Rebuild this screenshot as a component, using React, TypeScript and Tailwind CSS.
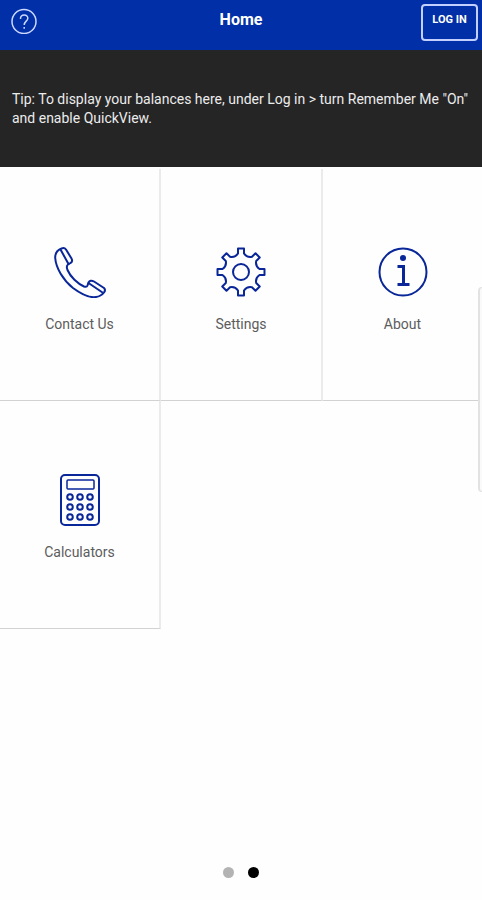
import type { ReactNode } from "react";

const rotate = (x: number, y: number, degrees: number) => {
  const a = (degrees * Math.PI) / 180;
  const px = 26 + x * Math.cos(a) - y * Math.sin(a);
  const py = 26 + x * Math.sin(a) + y * Math.cos(a);
  return `${px.toFixed(2)} ${py.toFixed(2)}`;
};

// One tooth and the curved gap after it, repeated eight times.
const gearPath =
  [0, 45, 90, 135, 180, 225, 270, 315]
    .map(
      (deg, i) =>
        `${i === 0 ? "M" : "L"}${rotate(-3, -18.5, deg)}` +
        `L${rotate(-3, -23.5, deg)}L${rotate(3, -23.5, deg)}` +
        `L${rotate(3, -18.5, deg)}` +
        `C${rotate(5, -15.5, deg)} ${rotate(-5, -15.5, deg + 45)} ${rotate(-3, -18.5, deg + 45)}`,
    )
    .join("") + "Z";

const PhoneIcon = () => (
  <svg
    aria-hidden="true"
    viewBox="0 0 52 52"
    className="size-[52px] fill-none stroke-[#0a2799] stroke-2"
    strokeLinejoin="round"
    strokeLinecap="round"
  >
    <path d="M7.5 2.5C3.5 4 1 7 1.2 12C2 22 9 34 19 42C27 48 35 52 42 51C46 50.5 48 49 50 46.5C51.5 44.5 51.5 43.5 50 42L40 35.5C37.5 34 35.5 34.5 34.5 36.5L33.5 39.5C33 41 31.5 41 30 40.5C23.5 37.5 16.5 31 13.5 24C12.5 21.5 12 20 14 18.5L16.5 17C18.5 16 18.5 14.5 17.5 12.5L12 3.5C10.5 1.5 9.5 1.5 7.5 2.5Z" />
    <path d="M6.5 3.5L14.5 18M34.5 37L48.5 46.5" />
  </svg>
);

const GearIcon = () => (
  <svg
    aria-hidden="true"
    viewBox="0 0 52 52"
    className="size-[52px] fill-none stroke-[#0a2799] stroke-2"
    strokeLinejoin="round"
  >
    <path d={gearPath} />
    <circle cx="26" cy="26" r="8" />
  </svg>
);

const InfoIcon = () => (
  <svg
    aria-hidden="true"
    viewBox="0 0 52 52"
    className="size-[52px] fill-none stroke-[#0a2799] stroke-2"
  >
    <circle cx="26" cy="26" r="23.5" />
    <circle cx="26" cy="12" r="3" className="fill-[#0a2799] stroke-none" />
    <path d="M20.5 20.5H26.5V38" className="stroke-3" />
    <path d="M20.5 38.5H32.5" className="stroke-3" />
  </svg>
);

const CalculatorIcon = () => (
  <svg
    aria-hidden="true"
    viewBox="0 0 52 52"
    className="size-[52px] fill-none stroke-[#0a2799] stroke-2"
  >
    <rect x="7" y="1" width="38" height="50" rx="4" />
    <rect x="13" y="6" width="27" height="9" rx="1" className="stroke-[1.5px]" />
    {[23, 33, 43].map((cy) =>
      [16, 26, 36].map((cx) => (
        <circle key={`${cx}-${cy}`} cx={cx} cy={cy} r="2.8" />
      )),
    )}
  </svg>
);

const Tile = ({
  label,
  icon,
  className,
}: {
  label: string;
  icon: ReactNode;
  className: string;
}) => (
  <button
    type="button"
    className={`flex flex-col items-center border-b border-r-[#ebebeb] border-b-[#d2d2d2] ${className}`}
  >
    {icon}
    <span className="mt-4 text-sm/5 text-[#5c5c5c]">{label}</span>
  </button>
);

export default function App() {
  return (
    <div className="relative flex min-h-screen flex-col bg-[#fefefe] font-['Roboto','Liberation_Sans',sans-serif]">
      <header className="grid h-[50px] grid-cols-3 items-start bg-[#002fa7] text-white">
        <button type="button" aria-label="Help" className="mt-2 ml-[11px] w-fit">
          <svg
            aria-hidden="true"
            viewBox="0 0 26 26"
            className="size-[26px] fill-none stroke-[#ccd8ff] stroke-[1.5px]"
          >
            <circle cx="13" cy="13.5" r="12" />
            <path d="M9.5 11C9.3 8.5 11 7 13.2 7C15.500 7 17 8.5 16.8 10.5C16.6 13 13.2 13.500 13.2 17" />
            <path d="M13.2 19V20.8" />
          </svg>
        </button>
        <h1 className="mt-2 text-center text-base/6 font-bold">Home</h1>
        <button
          type="button"
          className="mt-1 mr-1 h-[37px] w-[57px] justify-self-end rounded-sm border-2 border-[#c3d0ff] pb-1.5 text-[11px]/4 font-bold"
        >
          LOG IN
        </button>
      </header>

      <section className="h-[117px] bg-[#252525] px-3 pt-10 text-sm/[19px] text-[#ececec]">
        <p>
          Tip: To display your balances here, under Log in &gt; turn Remember Me
          "On" and enable QuickView.
        </p>
      </section>

      <main className="mt-0.5 grid grid-cols-[161fr_162fr_159fr]">
        <Tile
          label="Contact Us"
          icon={<PhoneIcon />}
          className="h-[232px] border-r-2 pt-[77px]"
        />
        <Tile
          label="Settings"
          icon={<GearIcon />}
          className="h-[232px] border-r-2 pt-[77px]"
        />
        <Tile
          label="About"
          icon={<InfoIcon />}
          className="h-[232px] pt-[77px]"
        />
        <Tile
          label="Calculators"
          icon={<CalculatorIcon />}
          className="h-[228px] border-r-2 pt-[73px]"
        />
      </main>

      <nav
        aria-label="Pages"
        className="mt-auto flex justify-center gap-3.5 pb-[22px]"
      >
        <button
          type="button"
          aria-label="Page 1"
          className="size-[11px] rounded-full bg-[#b3b3b3]"
        />
        <button
          type="button"
          aria-label="Page 2"
          aria-current="page"
          className="size-[11px] rounded-full bg-black"
        />
      </nav>

      {/* Edge of the slide-in panel */}
      <div className="absolute top-[287px] right-0 h-[205px] w-1 rounded-l-sm border-y border-l-2 border-[#e2e2e2] bg-[#fafafa]" />
    </div>
  );
}
